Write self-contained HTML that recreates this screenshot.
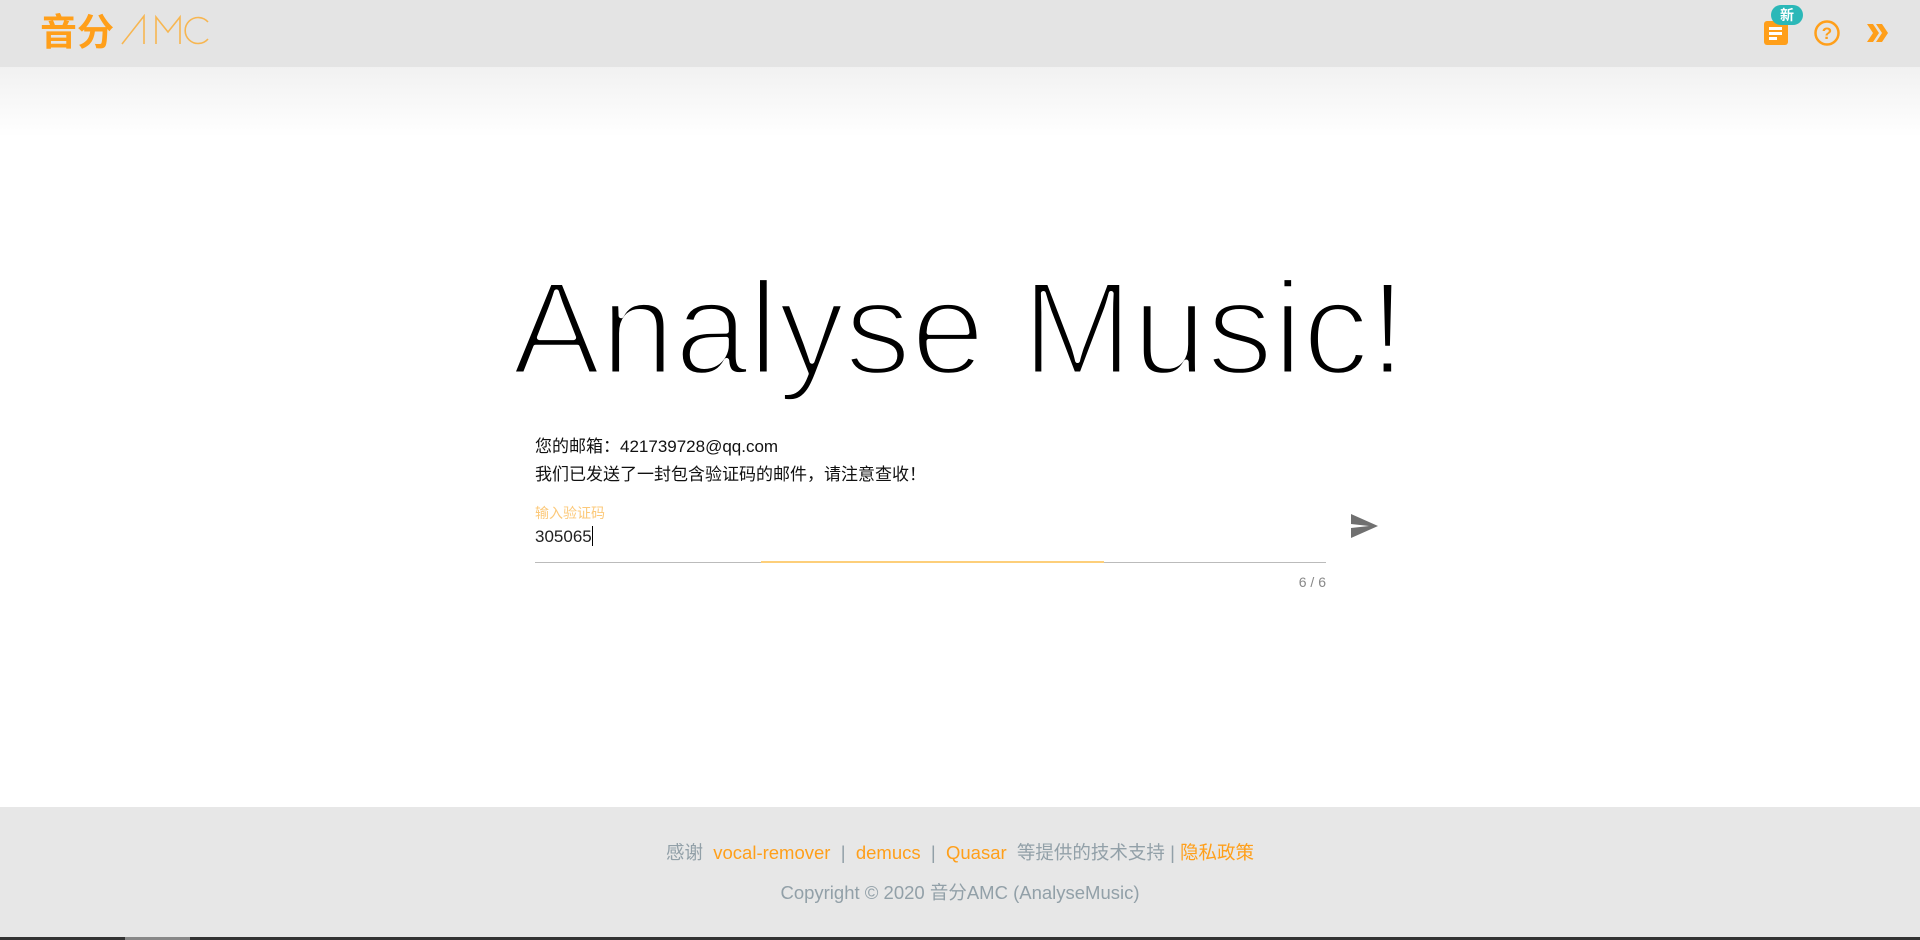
<!DOCTYPE html>
<html><head><meta charset="utf-8"><style>
*{margin:0;padding:0;box-sizing:border-box}
body{width:1920px;height:940px;position:relative;overflow:hidden;background:#fff;font-family:"Liberation Sans","Noto Sans CJK SC",sans-serif}
.hdr{position:absolute;left:0;top:0;width:1920px;height:67px;background:#e4e4e4}
.shadow{position:absolute;left:0;top:67px;width:1920px;height:70px;background:linear-gradient(#f1f1f1,#fff)}
.abs{position:absolute;white-space:nowrap}
.footer{position:absolute;left:0;top:807px;width:1920px;height:133px;background:#e7e7e7}
.o{color:#ff9f1a}
.g{color:#92a0a8}
</style></head><body>
<div class="hdr"></div>
<div class="shadow"></div>
<div class="abs" style="left:40px;top:9px;font-size:37px;color:#ff9f1a;font-family:'Noto Sans CJK SC',sans-serif;font-weight:bold;line-height:40px">音分</div>
<svg class="abs" style="left:120px;top:14px" width="90" height="32" viewBox="0 0 90 32" fill="none" stroke="#f7b651" stroke-width="1.6">
<path d="M2 30 L24 2 L24 30"/><path d="M36 30 V3 L48 18 L60 3 V30"/><path d="M88 8 A13 13 0 1 0 88 25"/>
</svg>
<div class="abs" style="left:1764px;top:21px;width:24px;height:24px;background:#ff9f1a;border-radius:3px"></div>
<div class="abs" style="left:1769px;top:27px;width:13px;height:2.5px;background:#fff"></div>
<div class="abs" style="left:1769px;top:32px;width:13px;height:2.5px;background:#fff"></div>
<div class="abs" style="left:1769px;top:37px;width:8px;height:2.5px;background:#fff"></div>
<div class="abs" style="left:1771px;top:5px;width:32px;height:20px;background:#2bb8b8;border-radius:10px;color:#fff;font-size:14px;line-height:20px;text-align:center;font-family:'Noto Sans CJK SC',sans-serif;font-weight:bold">新</div>
<svg class="abs" style="left:1813px;top:19px" width="28" height="28" viewBox="0 0 28 28"><circle cx="14" cy="14" r="11.5" fill="none" stroke="#ff9f1a" stroke-width="2.5"/><text x="14" y="20" text-anchor="middle" font-size="17" font-weight="bold" fill="#ff9f1a" font-family="Liberation Sans">?</text></svg>
<svg class="abs" style="left:1866px;top:22px" width="24" height="22" viewBox="0 0 24 22"><path d="M1 2 H7 L13 11 L7 20 H1 L7 11Z M10 2 H16 L22 11 L16 20 H10 L16 11Z" fill="#ff9f1a"/></svg>

<svg class="abs" style="left:0;top:0" width="1920" height="420"><text x="512" y="374" font-family="Liberation Sans" font-size="133" textLength="894" lengthAdjust="spacingAndGlyphs" fill="#000" stroke="#fff" stroke-width="5" stroke-linejoin="round" paint-order="fill">Analyse Music!</text></svg>

<div class="abs" style="left:535px;top:433px;font-size:17px;line-height:28px;color:#111">您的邮箱：421739728@qq.com<br>我们已发送了一封包含验证码的邮件，请注意查收！</div>
<div class="abs" style="left:535px;top:503px;font-size:14px;color:#fcc97a">输入验证码</div>
<div class="abs" style="left:535px;top:526px;font-size:17px;color:#222">305065<span style="display:inline-block;width:1px;height:20px;background:#000;vertical-align:-4px"></span></div>
<div class="abs" style="left:535px;top:562px;width:791px;height:1px;background:#bbb"></div>
<div class="abs" style="left:761px;top:561px;width:343px;height:2px;background:#fdcf7a"></div>
<div class="abs" style="left:1270px;top:574px;width:56px;text-align:right;font-size:14px;color:#888">6 / 6</div>
<svg class="abs" style="left:1351px;top:514px" width="28" height="24" viewBox="0 0 28 24"><path d="M0 0 L27 12 L0 24 V14 L18 12 L0 10Z" fill="#707070"/></svg>

<div class="footer"></div>
<div class="abs" style="left:0;top:841px;width:1920px;text-align:center;font-size:18.5px;line-height:24px"><span class="g">感谢</span>&nbsp; <span class="o">vocal-remover</span> <span class="g">&nbsp;|&nbsp;</span> <span class="o">demucs</span> <span class="g">&nbsp;|&nbsp;</span> <span class="o">Quasar</span> <span class="g">&nbsp;等提供的技术支持 |</span> <span class="o">隐私政策</span></div>
<div class="abs g" style="left:0;top:881px;width:1920px;text-align:center;font-size:18.5px;line-height:24px">Copyright © 2020 音分AMC (AnalyseMusic)</div>
<div class="abs" style="left:0;top:937px;width:1920px;height:3px;background:#333"></div>
<div class="abs" style="left:125px;top:937px;width:65px;height:3px;background:#888"></div>
</body></html>
